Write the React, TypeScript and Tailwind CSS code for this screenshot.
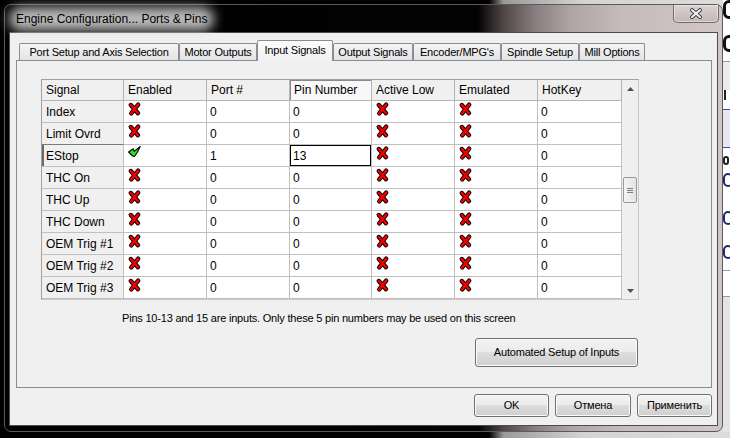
import React from "react";

const W = ["w-[82px]", "w-[83px]", "w-[83px]", "w-[82px]", "w-[83px]", "w-[83px]", "w-[84px]"];
const HEADERS = ["Signal", "Enabled", "Port #", "Pin Number", "Active Low", "Emulated", "HotKey"];

type Row = { name: string; en: boolean; port: string; pin: string };
const ROWS: Row[] = [
  { name: "Index", en: false, port: "0", pin: "0" },
  { name: "Limit Ovrd", en: false, port: "0", pin: "0" },
  { name: "EStop", en: true, port: "1", pin: "13" },
  { name: "THC On", en: false, port: "0", pin: "0" },
  { name: "THC Up", en: false, port: "0", pin: "0" },
  { name: "THC Down", en: false, port: "0", pin: "0" },
  { name: "OEM Trig #1", en: false, port: "0", pin: "0" },
  { name: "OEM Trig #2", en: false, port: "0", pin: "0" },
  { name: "OEM Trig #3", en: false, port: "0", pin: "0" },
];

const TABS = [
  { label: "Port Setup and Axis Selection", w: "w-[160px]", sel: false },
  { label: "Motor Outputs", w: "w-[78px]", sel: false },
  { label: "Input Signals", w: "w-[76px]", sel: true },
  { label: "Output Signals", w: "w-[80px]", sel: false },
  { label: "Encoder/MPG's", w: "w-[88px]", sel: false },
  { label: "Spindle Setup", w: "w-[78px]", sel: false },
  { label: "Mill Options", w: "w-[66px]", sel: false },
];

function RedX() {
  return (
    <svg width="11" height="12" viewBox="0 0 11 12" className="block overflow-visible">
      <path d="M1.8 2 L9 10.2 M9.2 1.6 L2.2 10.4" stroke="#000" strokeWidth="4.4" strokeLinecap="round" fill="none" />
      <path d="M1.8 2 L9 10.2 M9.2 1.6 L2.2 10.4" stroke="#f20000" strokeWidth="2.5" strokeLinecap="round" fill="none" />
    </svg>
  );
}

function GreenCheck() {
  return (
    <svg width="13" height="11" viewBox="0 0 13 11" className="block overflow-visible">
      <path
        d="M0.6 6 L5.2 2.8 L6.2 5.4 L12.2 0.5 L9.4 6.2 L6.4 10.5 L4.6 10 Z"
        fill="#22e622"
        stroke="#000"
        strokeWidth="1.1"
        strokeLinejoin="round"
      />
    </svg>
  );
}

const btn =
  "border border-[#707070] rounded-[3px] bg-[linear-gradient(#f2f2f2_0%,#ebebeb_49%,#dddddd_50%,#cfcfcf_100%)] shadow-[inset_0_0_0_1px_#fbfbfb] flex items-center justify-center text-black";

function Grid() {
  return (
    <div className="flex w-[598px] h-[221px] border border-[#a0a0a0] border-r-[#c8c8c8] border-b-[#c8c8c8] bg-white text-[12px] tracking-normal">
      <div className="w-[580px] flex flex-col">
        <div className="flex h-[21px]">
          {HEADERS.map((h, i) => (
            <div
              key={h}
              className={`${W[i]} h-[21px] border-r border-b border-[#b4b4b4] flex items-center pl-[4px] ${
                i === 3 ? "bg-[#f8f8f8] shadow-[inset_0_1px_0_#8a8a8a,inset_1px_0_0_#8a8a8a]" : "bg-[#f0f0f0]"
              }`}
            >
              {h}
            </div>
          ))}
        </div>
        {ROWS.map((r) => (
          <div key={r.name} className="flex h-[22px]">
            <div
              className={`${W[0]} h-[22px] border-r border-b border-[#c0c0c0] bg-[#f0f0f0] flex items-center pl-[4px] ${
                r.name === "EStop" ? "shadow-[inset_2px_0_0_#6a6a6a]" : ""
              } ${r.name === "Limit Ovrd" ? "border-b-[#7a7a7a]" : ""}`}
            >
              {r.name}
            </div>
            <div
              className={`${W[1]} h-[22px] border-r border-b border-[#c0c0c0] flex items-start ${
                r.en ? "pl-[4px] pt-[1px]" : "pl-[5px] pt-[2px]"
              }`}
            >
              {r.en ? <GreenCheck /> : <RedX />}
            </div>
            <div className={`${W[2]} h-[22px] border-r border-b border-[#c0c0c0] flex items-center pl-[3px]`}>{r.port}</div>
            <div
              className={`${W[3]} h-[22px] border-r border-b border-[#c0c0c0] flex items-center pl-[3px] ${
                r.name === "EStop" ? "shadow-[inset_0_0_0_1px_#000]" : ""
              }`}
            >
              {r.pin}
            </div>
            <div className={`${W[4]} h-[22px] border-r border-b border-[#c0c0c0] flex items-start pl-[5px] pt-[2px]`}>
              <RedX />
            </div>
            <div className={`${W[5]} h-[22px] border-r border-b border-[#c0c0c0] flex items-start pl-[5px] pt-[2px]`}>
              <RedX />
            </div>
            <div className={`${W[6]} h-[22px] border-r border-b border-[#c0c0c0] flex items-center pl-[3px]`}>0</div>
          </div>
        ))}
      </div>
      <div className="w-[16px] flex flex-col bg-[#efefef]">
        <div className="h-[17px] flex items-center justify-center">
          <svg width="7" height="4" viewBox="0 0 7 4">
            <path d="M0 4 L3.5 0 L7 4 Z" fill="#505050" />
          </svg>
        </div>
        <div className="h-[80px]" />
        <div className="h-[26px] mx-[1px] rounded-[2px] border border-[#9a9a9a] bg-[linear-gradient(90deg,#f4f4f4,#e4e4e4)] flex flex-col items-center justify-center gap-[1px]">
          <div className="w-[6px] h-px bg-[#808080]" />
          <div className="w-[6px] h-px bg-[#808080]" />
          <div className="w-[6px] h-px bg-[#808080]" />
        </div>
        <div className="flex-1" />
        <div className="h-[17px] flex items-center justify-center">
          <svg width="7" height="4" viewBox="0 0 7 4">
            <path d="M0 0 L7 0 L3.5 4 Z" fill="#505050" />
          </svg>
        </div>
      </div>
    </div>
  );
}

export default function App() {
  return (
    <div className="w-[730px] h-[438px] overflow-hidden flex items-start bg-[linear-gradient(90deg,#000_0%,#000_67%,#9a9a9a_69%,#d4d4d4_80%,#dcdcdc_100%)] [font-family:'Liberation_Sans',Arial,sans-serif] text-[11px] tracking-[-0.2px] text-black">
      {/* window */}
      <div className="ml-[4px] mt-[4px] w-[719px] h-[428px] rounded-[7px] border border-[#5a5a5a] bg-[linear-gradient(90deg,#000_0%,#030303_66%,#4f4646_69.5%,#8a7f80_74%,#b0a4a5_79%,#c7babb_86%,#d2c6c7_100%)] flex flex-col">
        {/* title bar */}
        <div className="h-[27px] flex items-start">
          <div className="flex-1 h-full flex items-center pl-[11px]">
            <span className="relative">
              <span className="absolute -inset-x-[7px] -inset-y-[3px] rounded-[12px] bg-[#d9d9d9]/85 blur-[6px]" />
              <span className="relative text-[12px] tracking-normal text-black">Engine Configuration... Ports &amp; Pins</span>
            </span>
          </div>
          <div className="w-[46px] h-[18px] mr-[3px] rounded-b-[5px] border border-t-0 border-[#4a4040]/70 bg-[linear-gradient(#dcd2d2,#c3b6b7)] shadow-[inset_0_0_0_1px_rgba(255,255,255,0.45)] flex items-center justify-center">
            <svg width="14" height="11" viewBox="0 0 14 11">
              <path d="M3 2 L11 9 M11 2 L3 9" stroke="#3e3e3e" strokeWidth="3.8" strokeLinecap="round" fill="none" />
              <path d="M3 2 L11 9 M11 2 L3 9" stroke="#f4f4f4" strokeWidth="2" strokeLinecap="round" fill="none" />
            </svg>
          </div>
        </div>
        {/* client area */}
        <div className="ml-[4px] w-[709px] h-[394px] border border-[#4c4c4c] bg-[#f0f0f0] flex flex-col pt-[7px] pl-[6px] pr-[5px]">
          {/* tab strip */}
          <div className="flex items-end h-[20px] pl-[3px]">
            {TABS.map((t) =>
              t.sel ? (
                <div
                  key={t.label}
                  className={`${t.w} relative z-10 -mb-px h-[21px] border border-b-0 border-[#898c95] rounded-t-[2px] bg-[linear-gradient(#fdfdfd,#f0f0f0)] flex items-center justify-center pb-[2px]`}
                >
                  {t.label}
                </div>
              ) : (
                <div
                  key={t.label}
                  className={`${t.w} h-[17px] border border-b-0 border-[#898c95] rounded-t-[2px] bg-[linear-gradient(#f5f5f5,#e3e3e3)] flex items-center justify-center`}
                >
                  {t.label}
                </div>
              )
            )}
          </div>
          {/* tab panel */}
          <div className="w-[696px] h-[328px] border border-[#898c95] bg-[#f0f0f0] pl-[24px] pt-[18px] flex flex-col">
            <Grid />
            <div className="mt-[12px] ml-[81px] leading-[13px]">
              Pins 10-13 and 15 are inputs. Only these 5 pin numbers may be used on this screen
            </div>
            <div className="w-[597px] flex justify-end mt-[13px]">
              <div className={`${btn} w-[163px] h-[29px]`}>Automated Setup of Inputs</div>
            </div>
          </div>
          {/* bottom buttons */}
          <div className="flex justify-end gap-[6px] mt-[6px]">
            <div className={`${btn} w-[75px] h-[23px]`}>OK</div>
            <div className={`${btn} w-[76px] h-[23px]`}>Отмена</div>
            <div className={`${btn} w-[75px] h-[23px]`}>Применить</div>
          </div>
        </div>
      </div>
      {/* background app visible to the right (fragments drawn as shapes) */}
      <div className="flex-1 h-[432px] bg-white flex flex-col overflow-hidden">
        <div className="h-[19px] w-[12px] shrink-0 border-[3px] border-[#111] rounded-[8px]" />
        <div className="h-[16px] shrink-0" />
        <div className="h-[17px] w-[12px] shrink-0 border-[3px] border-[#111] rounded-[8px]" />
        <div className="h-[10px] shrink-0 border-b border-[#9a9a9a]" />
        <div className="h-[28px] shrink-0 bg-[#ececec]" />
        <div className="h-[10px] w-[2px] ml-[1px] shrink-0 bg-[#222]" />
        <div className="h-[10px] shrink-0 border-b border-[#3050a0]" />
        <div className="h-[38px] shrink-0 bg-[#e8e6ee] border-b border-[#3050a0]" />
        <div className="h-[9px] w-[6px] mt-[8px] shrink-0 border-[2px] border-[#222] rounded-[4px]" />
        <div className="h-[8px] shrink-0" />
        <div className="h-[14px] w-[10px] shrink-0 border-[2px] border-[#1a2a70] rounded-[6px]" />
        <div className="h-[24px] shrink-0" />
        <div className="h-[14px] w-[10px] shrink-0 border-[2px] border-[#1a2a70] rounded-[6px]" />
        <div className="h-[20px] shrink-0" />
        <div className="h-[14px] w-[10px] shrink-0 border-[2px] border-[#1a2a70] rounded-[6px]" />
        <div className="h-[12px] shrink-0 border-b border-[#9a9a9a]" />
        <div className="h-[26px] shrink-0 border-b border-[#9a9a9a]" />
        <div className="flex-1 bg-[#e4e4e4]" />
      </div>
    </div>
  );
}
